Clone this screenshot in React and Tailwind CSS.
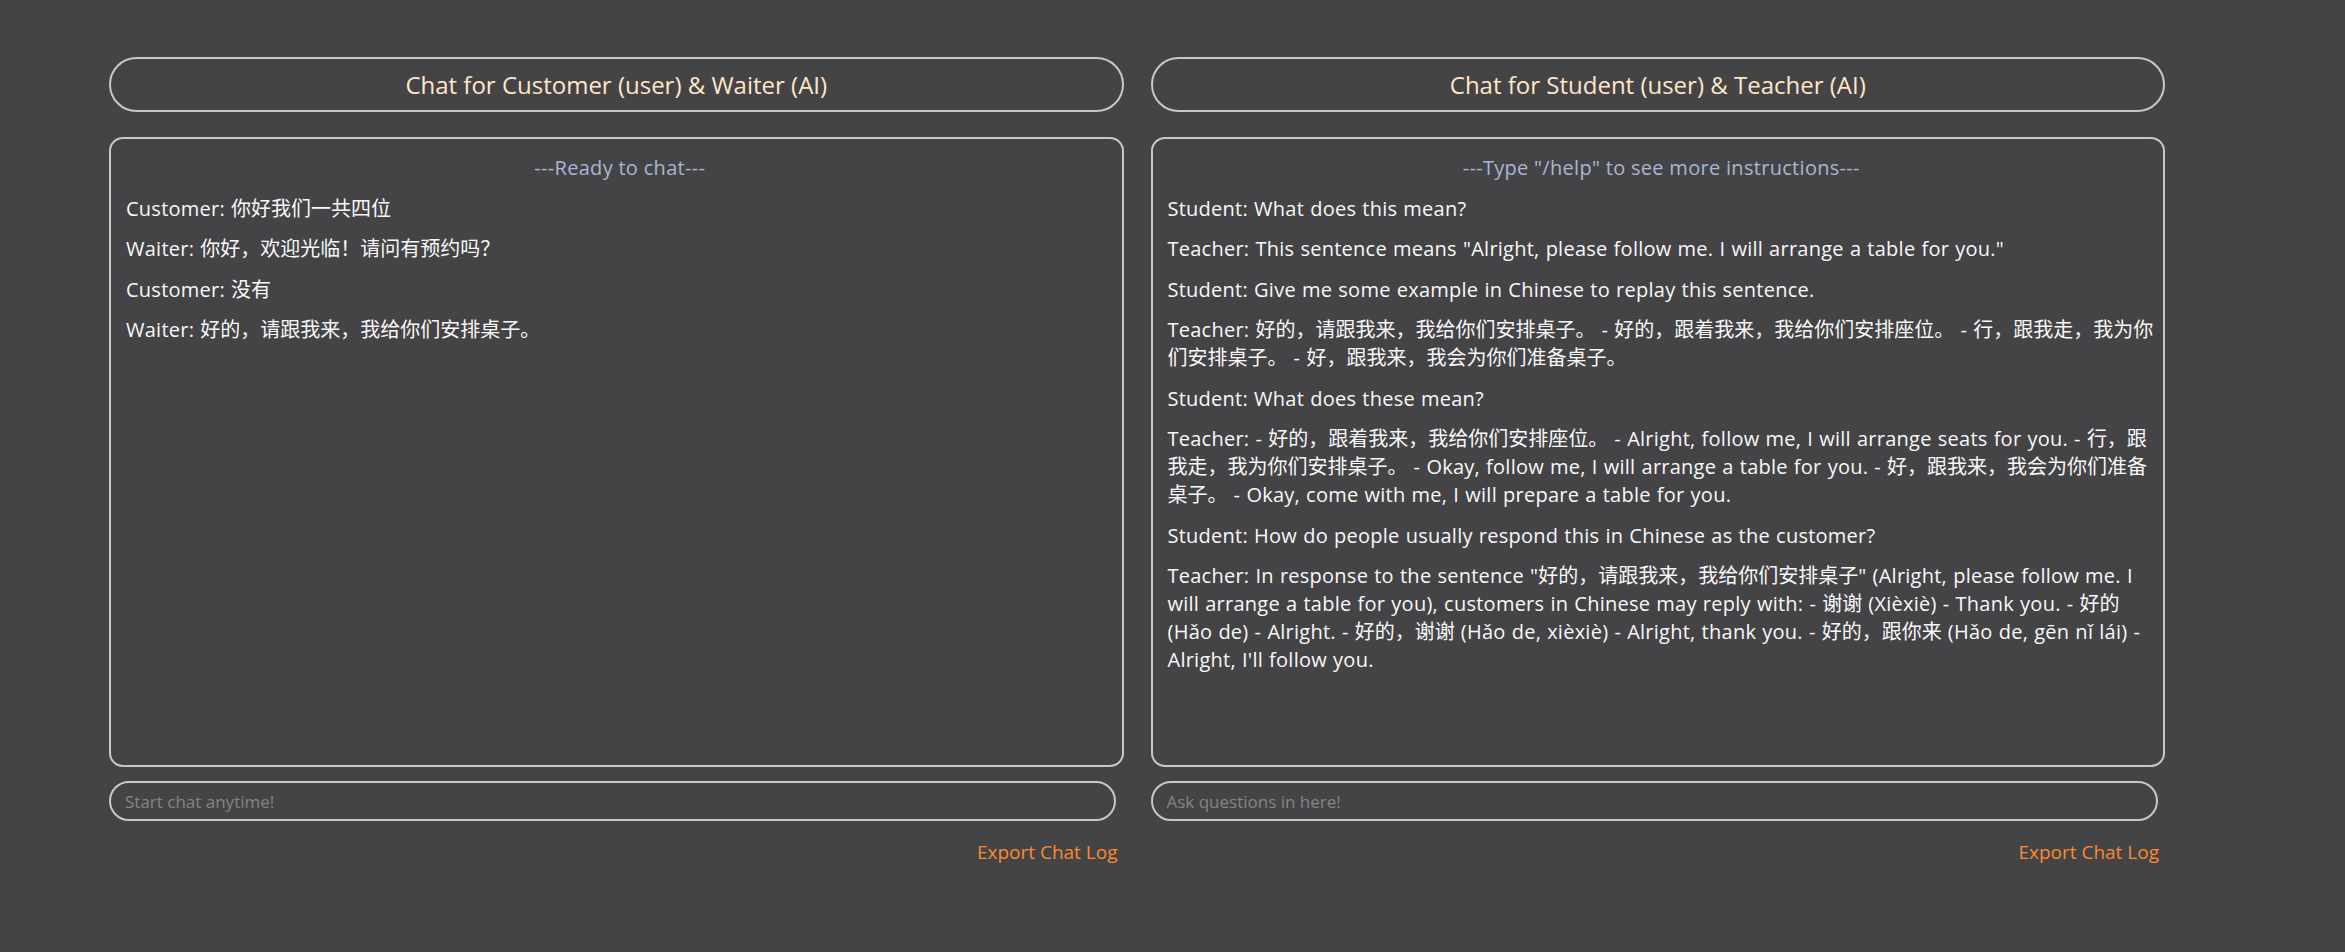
import React, { useState } from 'react'

const waiterLog = [
  { who: 'Customer', text: '你好我们一共四位' },
  { who: 'Waiter', text: '你好，欢迎光临！请问有预约吗？' },
  { who: 'Customer', text: '没有' },
  { who: 'Waiter', text: '好的，请跟我来，我给你们安排桌子。' },
]

const teacherLog = [
  { who: 'Student', text: 'What does this mean?' },
  { who: 'Teacher', text: 'This sentence means "Alright, please follow me. I will arrange a table for you."' },
  { who: 'Student', text: 'Give me some example in Chinese to replay this sentence.' },
  { who: 'Teacher', text: '好的，请跟我来，我给你们安排桌子。 - 好的，跟着我来，我给你们安排座位。 - 行，跟我走，我为你们安排桌子。 - 好，跟我来，我会为你们准备桌子。' },
  { who: 'Student', text: 'What does these mean?' },
  { who: 'Teacher', text: '- 好的，跟着我来，我给你们安排座位。 - Alright, follow me, I will arrange seats for you. - 行，跟我走，我为你们安排桌子。 - Okay, follow me, I will arrange a table for you. - 好，跟我来，我会为你们准备桌子。 - Okay, come with me, I will prepare a table for you.' },
  { who: 'Student', text: 'How do people usually respond this in Chinese as the customer?' },
  { who: 'Teacher', text: 'In response to the sentence "好的，请跟我来，我给你们安排桌子" (Alright, please follow me. I will arrange a table for you), customers in Chinese may reply with: - 谢谢 (Xièxiè) - Thank you. - 好的 (Hǎo de) - Alright. - 好的，谢谢 (Hǎo de, xièxiè) - Alright, thank you. - 好的，跟你来 (Hǎo de, gēn nǐ lái) - Alright, I\'ll follow you.' },
]

// latin runs get a touch of letter spacing, chinese runs stay as they are
const CJK = /([\u3000-\u303f\u4e00-\u9fff\uff00-\uffef]+)/

function Line({ text }){
  return text.split(CJK).map((part, i) =>
    i % 2 === 1 ? <span key={i} className="tracking-normal">{part}</span> : <span key={i}>{part}</span>
  )
}

function ChatColumn({ title, hint, log, placeholder }){
  const [draft, setDraft] = useState('')
  return (
    <div className="flex flex-col">
      <div className="h-[55px] border-2 border-[#cbc7c7] rounded-full flex items-center justify-center text-[24px] text-[#ffe6c6]">
        {title}
      </div>
      <div className="mt-[25px] h-[630px] border-2 border-[#cbc7c7] rounded-[14px] pt-[15px] pl-[15px] pr-[2px] overflow-hidden">
        <div className="text-center text-[#a9b6d3] leading-[28px] mb-[12.5px] tracking-[0.3px] pr-[6px]">{hint}</div>
        <div className="space-y-[12.5px]">
          {log.map((m, i) => (
            <p key={i} className="leading-[28px] text-[#f8f8f8] tracking-[0.25px] [word-spacing:0.65px]">
              <Line text={`${m.who}: ${m.text}`} />
            </p>
          ))}
        </div>
      </div>
      <input
        value={draft}
        onChange={e=>setDraft(e.target.value)}
        placeholder={placeholder}
        className="mt-[14px] h-[40px] w-[1007px] border-2 border-[#cbc7c7] rounded-full bg-transparent pl-[14px] text-[17px] text-white placeholder:text-[#858585] outline-none"
      />
      <div className="mt-[16px] pr-[6px] text-right">
        <button className="text-[#fb8a2e] text-[19px] leading-[28px]">Export Chat Log</button>
      </div>
    </div>
  )
}

export default function App(){
  return (
    <div className="min-h-screen bg-[#444446] font-['Open_Sans','Noto_Sans_CJK_SC',sans-serif] text-[20px]">
      <div className="pt-[57px] pl-[109px] grid grid-cols-2 gap-[27px] w-[2165px]">
        <ChatColumn
          title="Chat for Customer (user) & Waiter (AI)"
          hint="---Ready to chat---"
          log={waiterLog}
          placeholder="Start chat anytime!"
        />
        <ChatColumn
          title="Chat for Student (user) & Teacher (AI)"
          hint={'---Type "/help" to see more instructions---'}
          log={teacherLog}
          placeholder="Ask questions in here!"
        />
      </div>
    </div>
  )
}
